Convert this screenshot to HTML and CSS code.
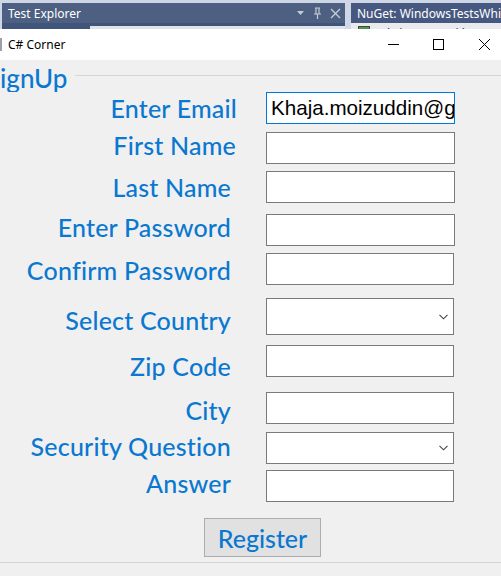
FILE: index.html
```html
<!DOCTYPE html>
<html>
<head>
<meta charset="utf-8">
<link rel="stylesheet" href="styles.css">
</head>
<body>
<div class="vs">
  <div class="te">
    <div class="te-head">
      <span class="te-title">Test Explorer</span>
      <span class="te-icons">
        <svg width="9" height="6" viewBox="0 0 9 6"><path d="M1 1h7L4.5 5z" fill="#c5cbd8"/></svg>
        <svg width="9" height="12" viewBox="0 0 9 12"><path d="M2 1h5M3 1v6M6 1v6M1 7h7M4.5 7v5" stroke="#c5cbd8" stroke-width="1.2" fill="none"/></svg>
        <svg width="11" height="11" viewBox="0 0 11 11"><path d="M1 1l9 9M10 1l-9 9" stroke="#c5cbd8" stroke-width="1.4"/></svg>
      </span>
    </div>
    <div class="te-sub"><div class="te-box"></div></div>
  </div>
  <div class="ng">
    <div class="ng-head">NuGet: WindowsTestsWhi</div>
    <div class="ng-sub"><span class="ng-icon"></span><span class="ng-text">WindowsTestsWhi</span></div>
  </div>
</div>

<div class="titlebar">
  <span class="app-edge"></span>
  <span class="app-title">C# Corner</span>
  <span class="win-controls">
    <svg class="ctl" width="46" height="31" viewBox="0 0 46 31"><path d="M25 15.5h11" stroke="#000" stroke-width="1"/></svg>
    <svg class="ctl" width="46" height="31" viewBox="0 0 46 31"><rect x="24.5" y="10.5" width="10" height="10" fill="none" stroke="#000" stroke-width="1"/></svg>
    <svg class="ctl" width="46" height="31" viewBox="0 0 46 31"><path d="M24 10l11 11M35 10l-11 11" stroke="#000" stroke-width="1"/></svg>
  </span>
</div>

<div class="form">
  <div class="legend">
    <span class="legend-text">SignUp</span>
    <span class="legend-line"></span>
  </div>

  <div class="row">
    <label class="label r1">Enter Email</label>
    <div class="box focus"><span class="caret"></span>Khaja.moizuddin@g</div>
  </div>
  <div class="row g8">
    <label class="label r2 up3">First Name</label>
    <div class="box"></div>
  </div>
  <div class="row g7">
    <label class="label">Last Name</label>
    <div class="box"></div>
  </div>
  <div class="row g11">
    <label class="label up3">Enter Password</label>
    <div class="box"></div>
  </div>
  <div class="row g7">
    <label class="label dn1">Confirm Password</label>
    <div class="box n"></div>
  </div>
  <div class="row g13">
    <label class="label dn4">Select Country</label>
    <div class="box n combo tall"><svg width="9" height="6" viewBox="0 0 9 6"><path d="M0.5 0.8l4 4 4-4" stroke="#444" stroke-width="1.1" fill="none"/></svg></div>
  </div>
  <div class="row g10">
    <label class="label dn5">Zip Code</label>
    <div class="box n"></div>
  </div>
  <div class="row g15">
    <label class="label dn2">City</label>
    <div class="box n"></div>
  </div>
  <div class="row g8">
    <label class="label up2">Security Question</label>
    <div class="box n combo"><svg width="9" height="6" viewBox="0 0 9 6"><path d="M0.5 0.8l4 4 4-4" stroke="#444" stroke-width="1.1" fill="none"/></svg></div>
  </div>
  <div class="row g6">
    <label class="label up3">Answer</label>
    <div class="box n"></div>
  </div>

  <div class="actions">
    <button class="btn">Register</button>
  </div>
  <div class="bottom-line"></div>
</div>
</body>
</html>
```
FILE: styles.css
```css
html, body {
  margin: 0;
  padding: 0;
  background: #f0f0f0;
  overflow: hidden;
}
body {
  width: 501px;
  height: 576px;
  font-family: "Lato", "Open Sans", sans-serif;
}

/* Visual Studio strip behind the window */
.vs {
  height: 29px;
  background: #cfd6e5;
  display: flex;
  padding-top: 3px;
  box-sizing: border-box;
  overflow: hidden;
}
.te {
  width: 350px;
  margin-left: 2px;
  display: flex;
  flex-direction: column;
}
.te-head {
  height: 20px;
  background: #4d6082;
  color: #fff;
  display: flex;
  align-items: center;
  justify-content: space-between;
  font-family: "Noto Sans", "Open Sans", sans-serif;
  font-size: 12px;
  padding: 0 4px 0 6px;
}
.te-icons {
  display: flex;
  align-items: center;
  gap: 8px;
}
.te-sub {
  flex: 1;
  background: #40557a;
  padding-left: 88px;
  padding-top: 3px;
}
.te-box {
  height: 100%;
  background: #dfe3ea;
}
.ng {
  flex: 1;
  margin-left: 6px;
  display: flex;
  flex-direction: column;
}
.ng-head {
  height: 20px;
  background: #46587f;
  color: #fff;
  font-family: "Noto Sans", "Open Sans", sans-serif;
  font-size: 12px;
  display: flex;
  align-items: center;
  padding-left: 6px;
  white-space: nowrap;
  overflow: hidden;
}
.ng-sub {
  flex: 1;
  background: #e8eaee;
  display: flex;
  align-items: flex-start;
  padding: 3px 0 0 7px;
  gap: 6px;
  font-size: 11px;
  white-space: nowrap;
  overflow: hidden;
}
.ng-icon {
  width: 12px;
  height: 12px;
  border: 1px solid #444;
  background: #4a9a4a;
  box-sizing: border-box;
}
.ng-text { color: #333; }

/* Window title bar */
.titlebar {
  height: 31px;
  background: #fff;
  display: flex;
  align-items: center;
}
.app-edge {
  width: 2px;
  height: 13px;
  background: #a0a0a0;
}
.app-title {
  margin-left: 6px;
  font-family: "Noto Sans", "Open Sans", sans-serif;
  font-size: 12px;
  color: #000;
  flex: 1;
}
.win-controls { display: flex; }
.ctl { display: block; }

/* Form */
.form {
  display: flex;
  flex-direction: column;
}
.legend {
  height: 32px;
  display: flex;
  align-items: center;
  overflow: hidden;
}
.legend-text {
  margin-left: -14px;
  font-size: 26px;
  font-weight: 500;
  line-height: 1;
  color: #0a78d0;
  padding-top: 4px;
}
.legend-line {
  flex: 1;
  height: 1px;
  background: #d5d5d5;
  margin-left: 8px;
  margin-top: -1px;
}
.row {
  display: flex;
  align-items: center;
}
.g6 { margin-top: 6px; }
.g7 { margin-top: 7px; }
.g8 { margin-top: 8px; }
.g10 { margin-top: 10px; }
.g11 { margin-top: 11px; }
.g13 { margin-top: 13px; }
.g15 { margin-top: 15px; }

.label {
  width: 238px;
  box-sizing: border-box;
  padding-right: 7px;
  text-align: right;
  font-size: 25px;
  font-weight: 500;
  letter-spacing: 0.2px;
  line-height: 1;
  color: #0a78d0;
  white-space: nowrap;
}
.label.r1 { padding-right: 1px; }
.label.r2 { padding-right: 2px; }
/* vertical nudges that keep the row height unchanged */
.up2 { margin-top: -2px; margin-bottom: 2px; }
.up3 { margin-top: -3px; margin-bottom: 3px; }
.dn1 { margin-top: 1px; margin-bottom: -1px; }
.dn2 { margin-top: 2px; margin-bottom: -2px; }
.dn4 { margin-top: 4px; margin-bottom: -4px; }
.dn5 { margin-top: 5px; margin-bottom: -5px; }

.box {
  margin-left: 28px;
  width: 189px;
  height: 32px;
  box-sizing: border-box;
  border: 1px solid #7a7a7a;
  background: #fff;
  display: flex;
  align-items: center;
  overflow: hidden;
  white-space: nowrap;
}
.box.n { width: 188px; }
.box.tall { height: 37px; }
.box.focus {
  border-color: #0078d7;
  font-family: "Liberation Sans", Arial, sans-serif;
  font-size: 20.6px;
  color: #000;
  padding-left: 2px;
}
.caret {
  width: 1px;
  height: 22px;
  background: #000;
  margin-right: 2px;
}
.combo {
  justify-content: flex-end;
  padding-right: 5px;
}
.combo svg { display: block; }

.actions {
  margin-top: 16px;
  padding-left: 204px;
}
.btn {
  width: 117px;
  height: 39px;
  background: #e1e1e1;
  border: 1px solid #adadad;
  font-family: "Lato", "Open Sans", sans-serif;
  font-size: 25px;
  font-weight: 500;
  color: #0a78d0;
  padding: 0;
  display: flex;
  align-items: center;
  justify-content: center;
}
.bottom-line {
  margin-top: 5px;
  height: 1px;
  background: #d5d5d5;
}
```
